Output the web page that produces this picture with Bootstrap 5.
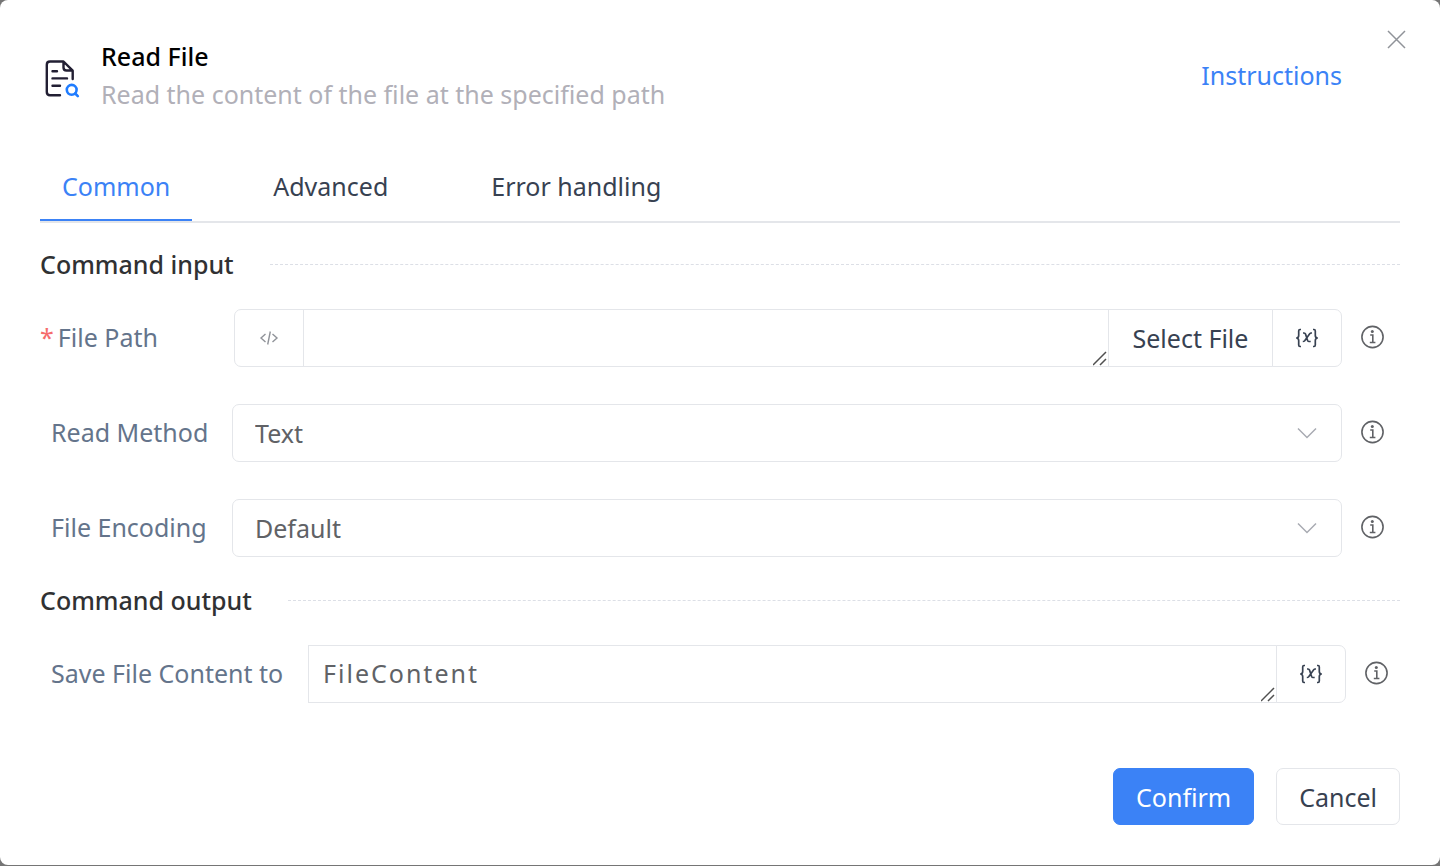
<!DOCTYPE html>
<html lang="en">
<head>
<meta charset="utf-8">
<meta name="viewport" content="width=device-width, initial-scale=1">
<title>Read File</title>
<link href="https://cdn.jsdelivr.net/npm/bootstrap@5.3.0/dist/css/bootstrap.min.css" rel="stylesheet">
<style>
  :root { --line: #e4e6ea; --blue: #3b82f6; --slate: #374151; }
  body { font-family: "Noto Sans", "Open Sans", sans-serif; font-size: 25px; line-height: 38px; background: #757575; color: var(--slate); }
  .dialog { border-radius: 8px; margin-bottom: 1px; padding: 37px 40px 40px; position: relative; }
  .dialog-close { position: absolute; top: 27px; right: 32px; line-height: 0; color: #909399; }
  .dialog-head { padding-right: 58px; gap: 21px; }
  .title-text, .section-text { font-size: 25px; line-height: 38px; font-weight: 500; margin: 0; color: #000; }
  .section-text { color: #303133; }
  .section-head { gap: 36px; margin: 22px 0 26px; }
  .section-head-output { margin-top: 24px; }
  .section-rule { border-top: 1px dashed #dcdfe6; }
  .hint-text { color: #b1b0b8; }
  .doc-link { color: var(--blue); }
  .tab-strip { border-bottom: 2px solid var(--line); margin-top: 45px; gap: 59px; }
  .tab-strip .nav-link { color: var(--slate); padding: 9px 22px 14px; margin-bottom: -1px; border: 0; border-bottom: 2px solid transparent; border-radius: 0; }
  .tab-strip .nav-link.active { color: var(--blue); border-color: var(--blue); }
  .tab-strip { padding-bottom: 1px; }
  .field-row { gap: 19px; padding-right: 15px; margin-bottom: 37px; }
  .output-row { padding-right: 11px; }
  .field-label { color: #64748b; padding: 0 0 2px 11px; white-space: nowrap; margin-right: -19px; }
  .label-col { width: 192px; }
  .label-col-required { width: 194px; padding-left: 0; }
  .label-col-wide { width: 268px; }
  .required-mark { color: #f56c6c; margin-right: 4px; }
  .field-box, .field-box:focus { border-color: var(--line); font-size: 25px; line-height: 38px; height: 58px; color: #606266; border-radius: 7px; padding: 9px 22px; background-color: #fff; }
  .form-select.field-box { background: #fff url("data:image/svg+xml,%3Csvg xmlns='http://www.w3.org/2000/svg' viewBox='0 0 20 12'%3E%3Cpath d='M1 1.5l9 9 9-9' fill='none' stroke='%23a8abb2' stroke-width='1.5'/%3E%3C/svg%3E") no-repeat right 24px center / 20px 12px; }
  textarea.field-box { min-height: 58px; padding: 8px 14px; overflow: hidden; resize: vertical; border-radius: 0; }
  textarea.field-box::-webkit-resizer { background: url("data:image/svg+xml,%3Csvg xmlns='http://www.w3.org/2000/svg' viewBox='0 0 15 15'%3E%3Cpath d='M0 14L13 1M7 14L13 8' fill='none' stroke='%23505050' stroke-width='1.5'/%3E%3C/svg%3E") no-repeat center / 15px 15px; }
  .spaced-value { letter-spacing: 2px; }
  .addon { background: #fff; border-color: var(--line); color: var(--slate); width: 70px; padding: 0; justify-content: center; border-radius: 7px; }
  .addon-wide { width: 165px; font-size: 25px; line-height: 38px; }
  .info-btn { line-height: 0; color: #606266; margin-bottom: 2px; }
  .action-bar { gap: 22px; margin-top: 65px; }
  .action { font-size: 25px; line-height: 38px; height: 57px; padding: 8px 22px; border-radius: 7px; }
  .action-main { background: var(--blue); border-color: var(--blue); color: #fff; }
  .action-plain { border-color: var(--line); color: var(--slate); background: #fff; }
</style>
</head>
<body>
<svg class="d-none" aria-hidden="true">
  <symbol id="info" viewBox="0 0 24 24"><circle cx="11.500" cy="12" r="10.600" fill="none" stroke="currentColor" stroke-width="1.600"/><circle cx="11.300" cy="6.400" r="1.500" fill="currentColor"/><path d="M9.200 10h2.600v7.500M8.800 17.500h5.600" fill="none" stroke="currentColor" stroke-width="1.600"/></symbol>
  <symbol id="variable" viewBox="0 0 24 20"><path d="M6 1.500H5Q3.700 1.500 3.700 3v4.500Q3.700 10 1.200 10 3.700 10 3.700 12.500V17q0 1.500 1.300 1.500h1M18 1.500h1Q20.300 1.500 20.300 3v4.500Q20.300 10 22.800 10 20.300 10 20.300 12.500V17q0 1.500-1.300 1.500h-1M8 5h1q1.200 0 1.500 1l2.100 6.500q.4 1 1.500 1H15.700M17 5h-.9q-.8 0-1.400.7l-5 7q-.7.8-1.900.8" fill="none" stroke="currentColor" stroke-width="1.700"/></symbol>
</svg>
<main class="dialog bg-white">
  <button type="button" class="dialog-close btn p-0 border-0" aria-label="Close"><svg width="24" height="24" viewBox="0 0 24 24" fill="none" stroke="currentColor" stroke-width="1.500"><path d="M4 4l17 17M21 4l-17 17"/></svg></button>
  <header class="dialog-head d-flex align-items-center">
    <svg class="flex-shrink-0" width="40" height="40" viewBox="0 -2 40 40" overflow="visible" fill="none" stroke="#221f33" stroke-width="2.400" stroke-linecap="round" stroke-linejoin="round"><path d="M20 38.300H10q-3.200 0-3.200-3.200V7.700q0-3.200 3.200-3.200h13.500l9.200 9.200V22M23.500 5v5.500q0 3 3 3h6M12.500 14.200h4.500M12.500 21.400h14.500M12.500 28.700h7.500"/><g stroke="#1f7cff" stroke-width="2.600"><circle cx="31.700" cy="32.800" r="4.900"/><path d="M35.200 36.500l2.600 2.600"/></g></svg>
    <div class="flex-grow-1"><h1 class="title-text">Read File</h1><p class="hint-text mb-0">Read the content of the file at the specified path</p></div>
    <a href="#help" class="doc-link text-decoration-none">Instructions</a>
  </header>
  <nav class="nav tab-strip"><a class="nav-link active" aria-current="page" href="#common">Common</a><a class="nav-link" href="#advanced">Advanced</a><a class="nav-link" href="#errors">Error handling</a></nav>
  <form id="common">
    <div class="section-head d-flex align-items-center"><h2 class="section-text">Command input</h2><div class="section-rule flex-grow-1"></div></div>
    <div class="field-row d-flex align-items-center">
      <label class="field-label label-col-required flex-shrink-0" for="path"><span class="required-mark">*</span>File Path</label>
      <div class="input-group flex-nowrap">
        <span class="input-group-text addon"><svg width="20" height="16" viewBox="0 0 20 16" fill="none" stroke="#909399" stroke-width="1.400" aria-hidden="true"><path d="M6.500 4l-4.500 4 4.500 4M13.500 4l4.500 4-4.500 4M11.300 1.500l-2.600 13"/></svg></span>
        <textarea class="form-control field-box" id="path" rows="1" required></textarea>
        <button type="button" class="btn addon addon-wide">Select File</button>
        <button type="button" class="btn addon d-flex align-items-center" aria-label="Insert variable"><svg width="24" height="20"><use href="#variable"/></svg></button>
      </div>
      <button type="button" class="info-btn btn p-0 border-0" aria-label="About File Path"><svg width="24" height="24"><use href="#info"/></svg></button>
    </div>
    <div class="field-row d-flex align-items-center">
      <label class="field-label label-col flex-shrink-0" for="method">Read Method</label>
      <select class="form-select field-box" id="method"><option>Text</option></select>
      <button type="button" class="info-btn btn p-0 border-0" aria-label="About Read Method"><svg width="24" height="24"><use href="#info"/></svg></button>
    </div>
    <div class="field-row d-flex align-items-center mb-0">
      <label class="field-label label-col flex-shrink-0" for="encoding">File Encoding</label>
      <select class="form-select field-box" id="encoding"><option>Default</option></select>
      <button type="button" class="info-btn btn p-0 border-0" aria-label="About File Encoding"><svg width="24" height="24"><use href="#info"/></svg></button>
    </div>
    <div class="section-head section-head-output d-flex align-items-center"><h2 class="section-text">Command output</h2><div class="section-rule flex-grow-1"></div></div>
    <div class="output-row field-row d-flex align-items-center mb-0">
      <label class="field-label label-col-wide flex-shrink-0" for="target">Save File Content to</label>
      <div class="input-group flex-nowrap">
        <textarea class="form-control field-box spaced-value" id="target" rows="1">FileContent</textarea>
        <button type="button" class="btn addon d-flex align-items-center" aria-label="Insert variable"><svg width="24" height="20"><use href="#variable"/></svg></button>
      </div>
      <button type="button" class="info-btn btn p-0 border-0" aria-label="About Save File Content to"><svg width="24" height="24"><use href="#info"/></svg></button>
    </div>
    <footer class="action-bar d-flex justify-content-end"><button type="submit" class="btn action action-main">Confirm</button><button type="button" class="btn action action-plain">Cancel</button></footer>
  </form>
</main>
<script src="https://cdn.jsdelivr.net/npm/bootstrap@5.3.0/dist/js/bootstrap.bundle.min.js"></script>
</body>
</html>
